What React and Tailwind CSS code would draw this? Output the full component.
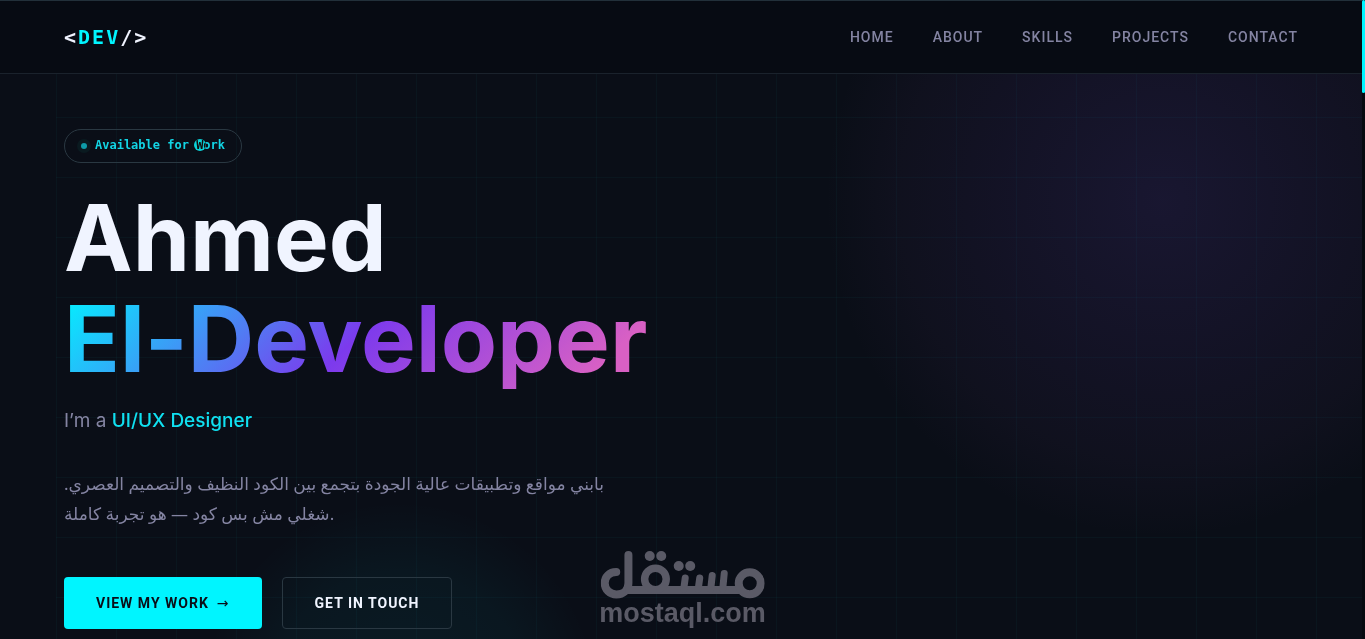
import React from 'react';

const navLinks = [
  { label: 'Home', href: '#home' },
  { label: 'About', href: '#about' },
  { label: 'Skills', href: '#skills' },
  { label: 'Projects', href: '#projects' },
  { label: 'Contact', href: '#contact' },
];

function Navbar() {
  return (
    <header className="relative z-10 border-y border-t-[#22303a] border-b-[#1a222c] bg-[#070b13]">
      <nav className="flex h-[72px] items-center justify-between px-16">
        <a
          href="#home"
          className="font-['DejaVu_Sans_Mono','Liberation_Mono',monospace] text-xl font-bold tracking-[2px] text-[#f0f4ff]"
        >
          &lt;<span className="text-[#00f5ff]">DEV</span>/&gt;
        </a>
        <ul className="flex gap-[39px]">
          {navLinks.map((link) => (
            <li key={link.href}>
              <a
                href={link.href}
                className="block font-['Roboto',sans-serif] text-sm font-medium uppercase tracking-[1px] text-[#8484a2]"
              >
                {link.label}
              </a>
            </li>
          ))}
        </ul>
      </nav>
    </header>
  );
}

// Grid lines and the two soft glows behind the hero
function Background() {
  return (
    <div className="absolute inset-0 overflow-hidden" aria-hidden="true">
      <div className="absolute -right-[140px] -top-[140px] size-[680px] rounded-full bg-[radial-gradient(circle,rgba(124,80,220,0.13)_0%,rgba(124,70,200,0.08)_35%,rgba(124,70,160,0.05)_55%,transparent_70%)]" />
      <div className="absolute -bottom-[260px] left-[200px] size-[400px] rounded-full bg-[radial-gradient(circle,rgba(0,245,255,0.06)_0%,rgba(0,245,255,0.04)_45%,transparent_70%)]" />
      <div className="absolute bottom-0 left-14 right-0 top-[57px] bg-[linear-gradient(rgba(0,245,255,0.03)_1px,transparent_1px),linear-gradient(90deg,rgba(0,245,255,0.03)_1px,transparent_1px)] bg-[size:60px_60px]" />
    </div>
  );
}

function Hero() {
  return (
    <main id="home" className="relative flex flex-col items-start px-16 pb-2.5 pt-[55px]">
      <div className="flex h-[34px] items-center gap-2 rounded-full border border-[#2a3842] px-4">
        <span className="size-[6px] rounded-full bg-[#0e9ca8] ring-4 ring-[#0a1a20]" />
        <span className="pb-0.5 font-['DejaVu_Sans_Mono',monospace] text-xs font-bold text-[#12d4e4]">
          Available for Work
        </span>
      </div>

      <h1 className="mt-6 text-[92px] font-bold leading-[101px] text-[#f0f4ff]">
        <span className="block">Ahmed</span>
        <span className="inline-block bg-[linear-gradient(135deg,#00f5ff_0%,#7c3aed_50%,#d860c4_90%)] bg-clip-text text-transparent">
          El-Developer
        </span>
      </h1>

      <p className="mt-4 text-[19px] leading-8 text-[#8484a2]">
        I’m a <span className="font-medium text-[#10e0f0]">UI/UX Designer</span>
      </p>

      <p
        lang="ar"
        className="mt-8 max-w-[560px] font-['Noto_Sans','DejaVu_Sans',sans-serif] text-[17px] leading-[30px] text-[#8484a2]"
      >
        بابني مواقع وتطبيقات عالية الجودة بتجمع بين الكود النظيف والتصميم العصري. شغلي مش بس كود — هو تجربة كاملة.
      </p>

      <div className="mt-12 flex gap-5 font-['Roboto',sans-serif] text-sm font-bold uppercase tracking-[1px]">
        <a href="#projects" className="flex h-[52px] items-center gap-2 rounded bg-[#00f5ff] px-8 text-[#0a0e18]">
          View My Work <span className="font-['DejaVu_Sans',sans-serif] font-normal">→</span>
        </a>
        <a
          href="#contact"
          className="flex h-[52px] items-center rounded border border-[#2a3842] px-8 text-[#f0f4ff]"
        >
          Get In Touch
        </a>
      </div>
    </main>
  );
}

function Watermark() {
  return (
    <div className="absolute bottom-3 left-1/2 z-20 flex -translate-x-1/2 flex-col items-center text-[#5a5a66]">
      <svg width="164" height="48" viewBox="0 0 164 48" fill="none" stroke="currentColor" aria-hidden="true">
        <g strokeWidth="8" strokeLinecap="round">
          <path d="M15.500 21C8.500 21 4 26 4 32C4 38.500 9 43.500 15.700 43.500C22.500 43.500 27.700 39 27.700 32V4" />
          <path d="M25 39H139" strokeLinecap="butt" />
          <circle cx="54.700" cy="28" r="10.800" strokeWidth="7.500" />
          <circle cx="149" cy="32.300" r="11" />
          <path d="M84.500 27L83 38M99 27L97.500 38M111.500 24.500L110 38M123.500 22.500L122 38" strokeWidth="7" />
        </g>
        <g fill="currentColor" stroke="none">
          <circle cx="49" cy="5" r="5" />
          <circle cx="60.500" cy="5" r="5" />
          <circle cx="78" cy="15" r="5" />
          <circle cx="89.500" cy="15" r="5" />
        </g>
      </svg>
      <span className="font-['Liberation_Sans',sans-serif] text-[27px] font-bold leading-7">mostaql.com</span>
    </div>
  );
}

function App() {
  return (
    <div className="relative flex min-h-screen bg-[#0a0e17] font-['Inter',sans-serif]">
      <div className="relative min-w-0 flex-1">
        <Background />
        <Navbar />
        <Hero />
      </div>

      {/* scrollbar */}
      <div className="w-[3px] bg-[#060a10]">
        <div className="h-[93px] rounded-sm bg-[#00f5ff]" />
      </div>

      {/* custom cursor */}
      <div className="absolute left-[194px] top-[139px] z-30 size-3 rounded-full bg-[#00e0f0] mix-blend-difference" />
      <Watermark />
    </div>
  );
}

export default App;
